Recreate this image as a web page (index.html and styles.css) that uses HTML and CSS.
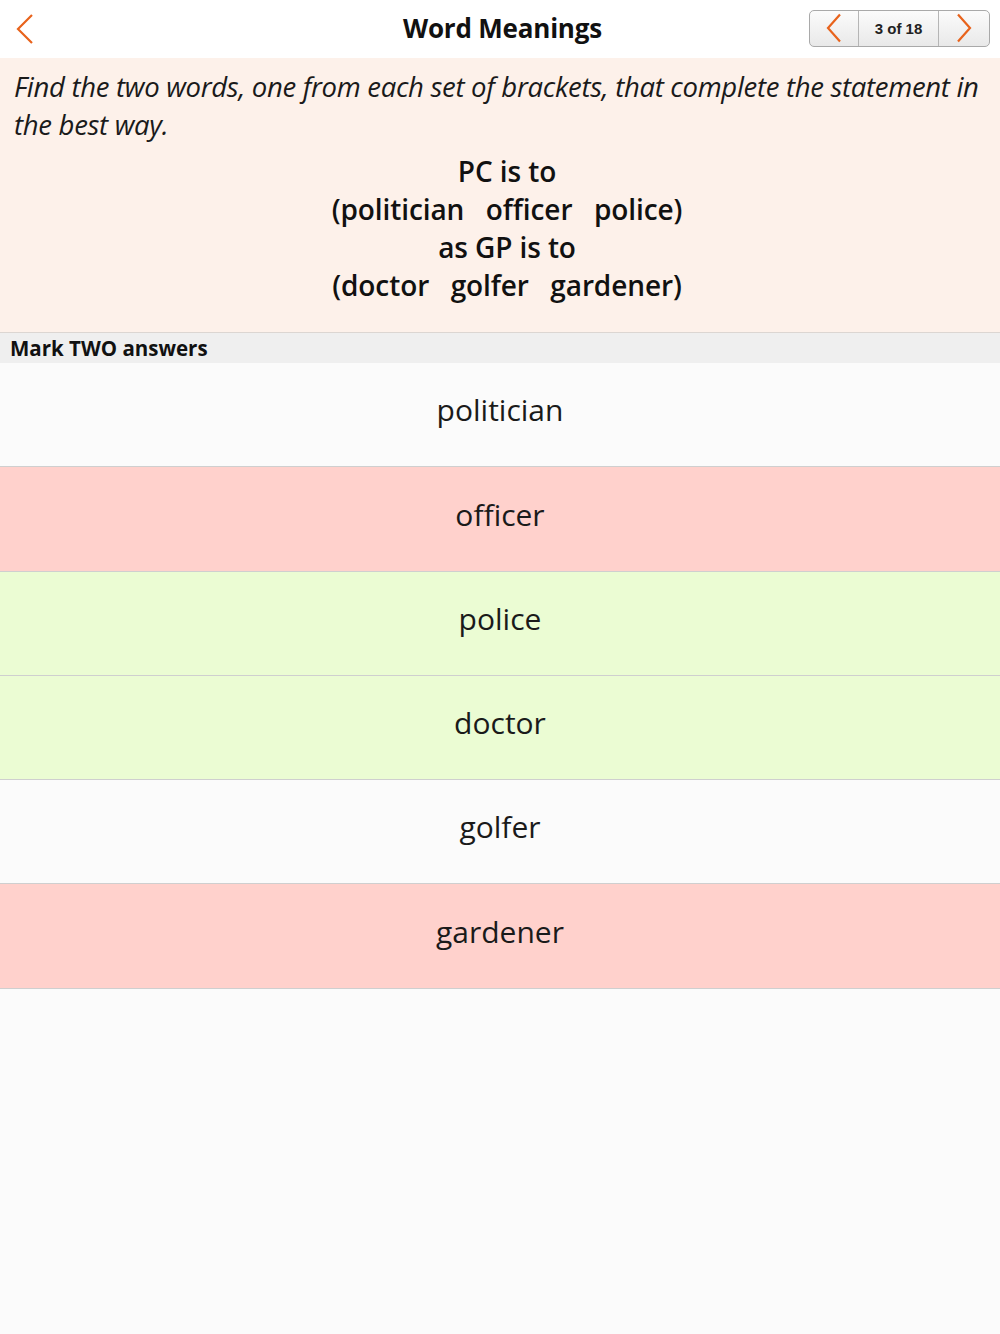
FILE: index.html
```html
<!DOCTYPE html>
<html>
<head>
<meta charset="utf-8">
<link rel="stylesheet" href="styles.css">
</head>
<body>
<div class="page">
  <header class="topbar">
    <button class="back" aria-label="Back">
      <svg width="20" height="32" viewBox="0 0 20 32"><path d="M17 2 L3 16 L17 30" fill="none" stroke="#e8631c" stroke-width="2.2"/></svg>
    </button>
    <h1 class="title">Word Meanings</h1>
    <div class="pager">
      <button class="seg seg-prev" aria-label="Previous">
        <svg width="18" height="30" viewBox="0 0 18 30"><path d="M15 1.5 L3 15 L15 28.5" fill="none" stroke="#e8631c" stroke-width="2.2"/></svg>
      </button>
      <div class="seg seg-count">3 of 18</div>
      <button class="seg seg-next" aria-label="Next">
        <svg width="18" height="30" viewBox="0 0 18 30"><path d="M3 1.5 L15 15 L3 28.5" fill="none" stroke="#e8631c" stroke-width="2.2"/></svg>
      </button>
    </div>
  </header>

  <section class="question">
    <p class="instruction">Find the two words, one from each set of brackets, that complete the statement in the best way.</p>
    <div class="statement">
      <div>PC is to</div>
      <div>(politician&nbsp;&nbsp; officer&nbsp;&nbsp; police)</div>
      <div>as GP is to</div>
      <div>(doctor&nbsp;&nbsp; golfer&nbsp;&nbsp; gardener)</div>
    </div>
  </section>

  <div class="subhead">Mark TWO answers</div>

  <ul class="answers">
    <li class="answer">politician</li>
    <li class="answer wrong">officer</li>
    <li class="answer right">police</li>
    <li class="answer right">doctor</li>
    <li class="answer">golfer</li>
    <li class="answer wrong">gardener</li>
  </ul>
</div>
</body>
</html>
```

FILE: styles.css
```css
* { box-sizing: border-box; }
html, body {
  margin: 0;
  padding: 0;
  background: #fbfbfb;
  font-family: "Open Sans", "Noto Sans", sans-serif;
  color: #111;
}
.page {
  width: 1000px;
  min-height: 1334px;
  background: #fbfbfb;
}
.topbar {
  height: 58px;
  background: #fff;
  display: grid;
  grid-template-columns: 1fr auto 1fr;
  align-items: center;
  padding: 0 10px 0 15px;
}
.back {
  justify-self: start;
  background: none;
  border: 0;
  padding: 0;
  margin-top: -1px;
  display: flex;
}
.title {
  margin: 0 0 2px;
  font-size: 26px;
  font-weight: 700;
  letter-spacing: -0.2px;
  color: #111;
}
.pager {
  justify-self: end;
  display: flex;
  height: 37px;
  margin-top: -2px;
  border: 1px solid #a9a9a9;
  border-radius: 5px;
  overflow: hidden;
  background: linear-gradient(#fbfbfb, #e9e9e9);
}
.seg {
  display: flex;
  align-items: center;
  justify-content: center;
  background: none;
  border: 0;
  padding: 0;
  font-family: "Liberation Sans", Arial, sans-serif;
}
.seg-prev { width: 49px; border-right: 1px solid #b5b5b5; }
.seg-count { width: 80px; border-right: 1px solid #b5b5b5; font-size: 15px; font-weight: 700; color: #222; }
.seg-next { width: 50px; }

.question {
  background: #fdf1ea;
  border-bottom: 1px solid #dcd6d2;
  padding: 10px 0 20px 14px;
  height: 275px;
}
.instruction {
  margin: 0;
  padding-right: 14px;
  font-style: italic;
  font-size: 27.5px;
  line-height: 38px;
  letter-spacing: -0.3px;
  color: #1a1a1a;
}
.statement {
  margin-top: 8px;
  text-align: center;
  font-weight: 600;
  font-size: 28px;
  line-height: 38px;
  letter-spacing: -0.1px;
  color: #111;
}
.subhead {
  background: #efefef;
  height: 30px;
  line-height: 31px;
  padding-left: 10px;
  font-size: 20.5px;
  font-weight: 700;
  letter-spacing: 0;
  color: #111;
}
.answers {
  list-style: none;
  margin: 0;
  padding: 0;
}
.answer {
  height: 104px;
  display: flex;
  align-items: center;
  justify-content: center;
  font-size: 30px;
  letter-spacing: 0;
  color: #1a1a1a;
  background: #fbfbfb;
  border-bottom: 1px solid #cfcfcf;
  padding-bottom: 10px;
}
.answer:nth-child(2) { height: 105px; }
.answer:last-child { height: 105px; }
.answer.wrong { background: #ffd1cc; }
.answer.right { background: #ebfcd3; }
```
